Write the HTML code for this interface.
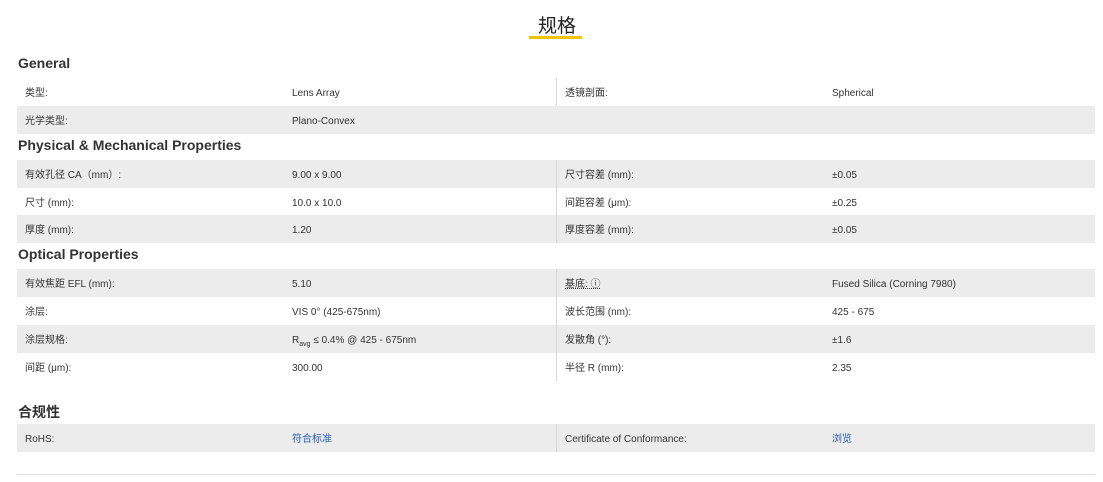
<!DOCTYPE html>
<html><head><meta charset="utf-8"><style>
*{margin:0;padding:0;box-sizing:border-box}
body{width:1103px;height:482px;background:#fff;position:relative;overflow:hidden;font-family:"Liberation Sans","Noto Sans CJK SC",sans-serif;color:#333}
.t{position:absolute;left:538px;top:11px;font-size:19px;color:#222;font-family:"Noto Sans CJK SC",sans-serif}
.ul{position:absolute;left:529px;top:36px;width:53px;height:3px;background:#f2c500}
.h{position:absolute;left:18px;font-size:14px;font-weight:bold;color:#333;letter-spacing:0}
.r{position:absolute;left:17px;width:1078px;height:28px;font-size:10px;line-height:28px}
.g{background:#ececec}
.r span{position:absolute;top:2px;line-height:28px}
.a{left:8px}.b{left:275px}.c{left:548px}.d{left:815px}
.v{position:absolute;left:556px;width:1px;background:#d8d8d8}
.l{color:#2a5db0}
sub{font-size:7px;line-height:0}
</style></head><body>
<div class="t">规格</div><div class="ul"></div>
<div class="h" style="top:55px">General</div>
<div class="r" style="top:78px"><span class="a">类型:</span><span class="b">Lens Array</span><span class="c">透镜剖面:</span><span class="d">Spherical</span></div>
<div class="r g" style="top:106px"><span class="a">光学类型:</span><span class="b">Plano-Convex</span></div>
<div class="v" style="top:78px;height:28px"></div>
<div class="h" style="top:137px">Physical &amp; Mechanical Properties</div>
<div class="r g" style="top:160px"><span class="a">有效孔径 CA（mm）:</span><span class="b">9.00 x 9.00</span><span class="c">尺寸容差 (mm):</span><span class="d">±0.05</span></div>
<div class="r" style="top:188px"><span class="a">尺寸 (mm):</span><span class="b">10.0 x 10.0</span><span class="c">间距容差 (μm):</span><span class="d">±0.25</span></div>
<div class="r g" style="top:215px"><span class="a">厚度 (mm):</span><span class="b">1.20</span><span class="c">厚度容差 (mm):</span><span class="d">±0.05</span></div>
<div class="v" style="top:160px;height:83px"></div>
<div class="h" style="top:246px">Optical Properties</div>
<div class="r g" style="top:269px"><span class="a">有效焦距 EFL (mm):</span><span class="b">5.10</span><span class="c" style="text-decoration:underline dotted">基底: ⓘ</span><span class="d">Fused Silica (Corning 7980)</span></div>
<div class="r" style="top:297px"><span class="a">涂层:</span><span class="b">VIS 0° (425-675nm)</span><span class="c">波长范围 (nm):</span><span class="d">425 - 675</span></div>
<div class="r g" style="top:325px"><span class="a">涂层规格:</span><span class="b">R<sub>avg</sub> ≤ 0.4% @ 425 - 675nm</span><span class="c">发散角 (°):</span><span class="d">±1.6</span></div>
<div class="r" style="top:353px"><span class="a">间距 (μm):</span><span class="b">300.00</span><span class="c">半径 R (mm):</span><span class="d">2.35</span></div>
<div class="v" style="top:269px;height:112px"></div>
<div class="h" style="top:402px">合规性</div>
<div class="r g" style="top:424px"><span class="a">RoHS:</span><span class="b l">符合标准</span><span class="c">Certificate of Conformance:</span><span class="d l">浏览</span></div>
<div class="v" style="top:424px;height:28px"></div>
<div style="position:absolute;left:17px;top:474px;width:1078px;height:1px;background:#ddd"></div>
</body></html>
